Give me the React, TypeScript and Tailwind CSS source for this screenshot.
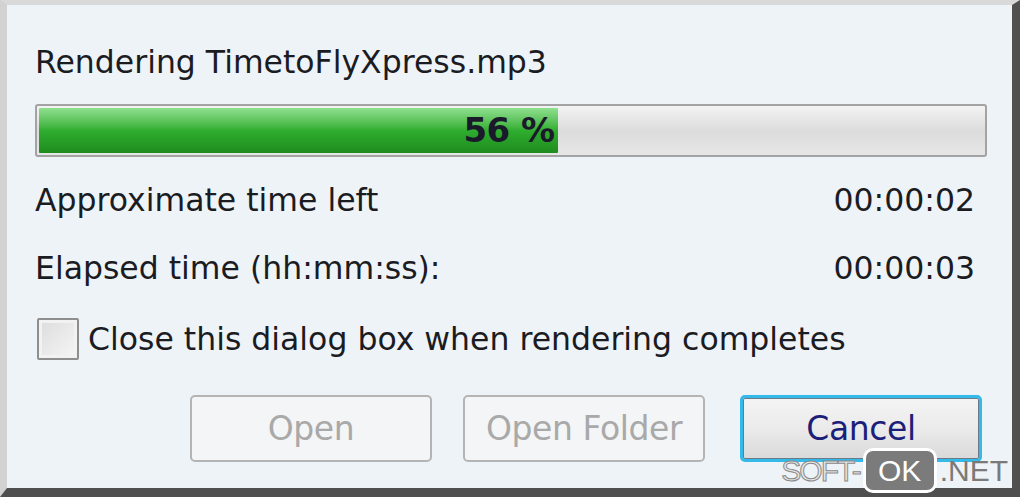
import { useState } from 'react';

function Row({ label, value }: { label: string; value: string }) {
  return (
    <div className="flex items-center justify-between pr-[37px]">
      <span>{label}</span>
      <span>{value}</span>
    </div>
  );
}

function DialogButton({ label, primary }: { label: string; primary?: boolean }) {
  if (primary) {
    return (
      <button
        type="button"
        className="flex h-[67px] w-[242px] items-center justify-center rounded-[5px] border-[3px] border-[#33b9ea] bg-gradient-to-b from-[#f4f4f4] via-[#ebebeb] to-[#d9d9d9] text-[#1c1f7a] shadow-[inset_0_0_0_1px_#6a7a86]"
      >
        {label}
      </button>
    );
  }
  return (
    <button
      type="button"
      disabled
      className="flex h-[67px] w-[242px] items-center justify-center rounded-[5px] border-2 border-[#b4b4b4] bg-[#f4f5f6] text-[#a9a9a9]"
    >
      {label}
    </button>
  );
}

export default function App() {
  const [closeWhenDone, setCloseWhenDone] = useState(false);
  const progress = 55;

  return (
    <div
      className="relative flex h-[497px] w-[1020px] flex-col border-t-[5px] border-r-[8px] border-b-[9px] border-l-[7px] border-t-[#d9d9d9] border-r-[#505050] border-b-[#4f4f4f] border-l-[#d2d2d2] bg-[#eef3f8] text-[31.5px] text-[#1b1b22]"
      style={{ fontFamily: '"DejaVu Sans", Verdana, sans-serif' }}
    >
      <div className="flex flex-1 flex-col pl-[28px] pt-[38px]">
        <div className="leading-[38px]">Rendering TimetoFlyXpress.mp3</div>

        <div className="relative mt-[23px] mr-[25px] h-[53px] rounded-[3px] border-2 border-[#a3a3a3] bg-gradient-to-b from-[#f3f3f3] via-[#dcdcdc] to-[#e6e6e6] p-[2px]">
          <div
            className="h-full rounded-[1px] bg-gradient-to-b from-[#8fe08f] via-[#2fae2f] to-[#1e8c1e]"
            style={{ width: `${progress}%` }}
          />
          <div className="absolute inset-0 flex items-center justify-center pr-[4px] text-[34px] font-bold tracking-[-0.5px] text-[#1a1a2a]">
            56 %
          </div>
        </div>

        <div className="mt-[24px] flex flex-col gap-[30px] leading-[38px]">
          <Row label="Approximate time left" value="00:00:02" />
          <Row label="Elapsed time (hh:mm:ss):" value="00:00:03" />
        </div>

        <label className="mt-[31px] flex items-center gap-[9px] leading-[38px]">
          <input
            type="checkbox"
            checked={closeWhenDone}
            onChange={(e) => setCloseWhenDone(e.target.checked)}
            className="ml-[2px] h-[42px] w-[42px] appearance-none rounded-[2px] border-2 border-[#8e8e8e] bg-gradient-to-br from-[#dcdcdc] to-[#f6f6f6] shadow-[inset_0_0_0_3px_#f2f2f2]"
          />
          <span>Close this dialog box when rendering completes</span>
        </label>

        <div className="mt-[35px] flex justify-end gap-[31px] pr-[30px] text-[33px] tracking-[-0.4px]">
          <DialogButton label="Open" />
          <div className="mr-[4px]">
            <DialogButton label="Open Folder" />
          </div>
          <DialogButton label="Cancel" primary />
        </div>
      </div>

      <div
        className="absolute right-[4px] bottom-[-5px] flex items-center text-[30px] leading-none"
        style={{ fontFamily: '"Liberation Sans", Arial, sans-serif' }}
      >
        <span className="tracking-[-2px] text-[#e6e6e6] [-webkit-text-stroke:1px_#8a8a8a]">SOFT-</span>
        <span className="ml-[3px] flex h-[45px] w-[74px] items-center justify-center rounded-[10px] border-[3px] border-white bg-[#7b7b7b] text-white">
          OK
        </span>
        <span className="ml-[3px] text-[#7a7a7a]">.NET</span>
      </div>
    </div>
  );
}
